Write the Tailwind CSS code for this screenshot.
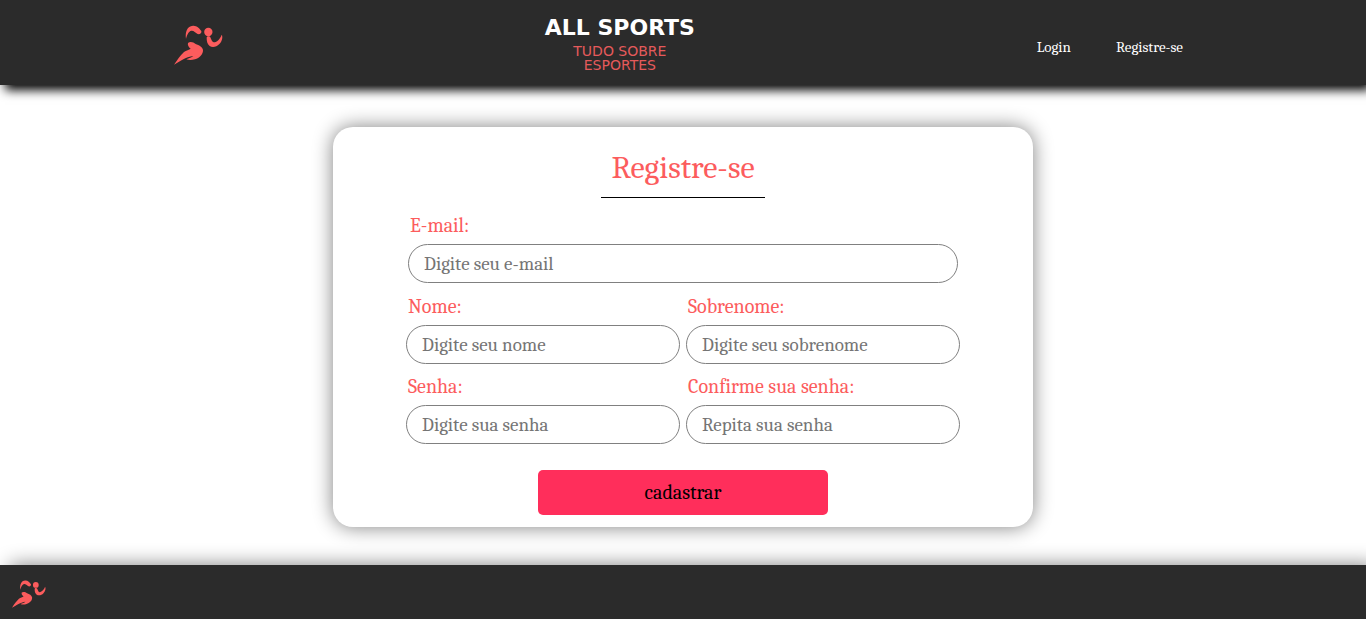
<!DOCTYPE html>
<html lang="pt-BR">
<head>
<meta charset="utf-8">
<meta name="viewport" content="width=device-width, initial-scale=1">
<title>All Sports - Registre-se</title>
<script src="https://cdn.jsdelivr.net/npm/@tailwindcss/browser@4"></script>
</head>
<body class="flex min-h-screen flex-col bg-white font-['Cambria','Noto_Serif','Droid_Serif','DejaVu_Serif_Condensed','DejaVu_Serif',serif]">
<svg class="hidden">
  <symbol id="runner" viewBox="27 27 147 120">
    <path d="M63 69C60 48 66 30 84 29C95 28 104 37 109 45C111 51 104 56 98 54C91 50 86 43 79 44C71 46 66 56 63 69Z"/>
    <circle cx="130" cy="48" r="12.5"/>
    <path d="M125 66C124 60 134 59 136 64C139 70 140 77 146 79C157 79 166 67 170 56C174 62 172 75 163 84C155 93 142 95 134 90C126 84 125 74 125 66Z"/>
    <path d="M69 81C75 76 85 78 92 84C102 88 112 92 114 102C115 115 103 126 90 130C80 133 71 133 64 130C72 127 80 124 85 120C75 121 62 126 51 132C42 137 34 142 27 146C37 132 46 118 57 108C64 103 72 101 77 98C71 94 67 87 69 81Z"/>
  </symbol>
</svg>
<header class="relative flex h-[85px] shrink-0 items-center bg-[#2b2b2b] shadow-[5px_5px_10px_#000]">
  <a href="#" aria-label="All Sports" class="ml-[174px]"><svg class="mt-1 h-10 w-[49px] fill-[#fc5c5d]"><use href="#runner"/></svg></a>
  <div class="flex flex-1 flex-col items-center pt-0.5 pr-5 text-center font-['DejaVu_Sans',sans-serif]">
    <p class="text-[22px] leading-6 font-bold text-white">ALL SPORTS</p>
    <p class="mt-1 flex flex-col text-[14px] leading-[14px] text-[#e55a5b]"><span>TUDO SOBRE</span><span>ESPORTES</span></p>
  </div>
  <nav class="mt-2.5 mr-[183px] flex gap-[45px] text-[15px] text-white">
    <a href="#">Login</a>
    <a href="#">Registre-se</a>
  </nav>
</header>
<main class="flex flex-1 justify-center px-4 pt-[42px] pb-[38px]">
  <form class="flex w-full max-w-[700px] flex-col items-center rounded-[20px] bg-white px-[73px] pt-5 pb-3 text-[20px] text-[#fc5c5d] shadow-[0_0_20px_#808080]">
    <h1 class="border-b border-black px-2.5 pb-2 text-[32px] leading-[42px]">Registre-se</h1>
    <div class="mt-4 flex w-full flex-col px-0.5">
      <label for="email" class="px-0.5 leading-6">E-mail:</label>
      <input id="email" type="email" placeholder="Digite seu e-mail" class="mt-1.5 h-[39px] rounded-full border border-[#808080] px-[15px] text-[19px] text-black placeholder:text-[#757575]">
    </div>
    <div class="mt-3 grid w-full grid-cols-2 gap-x-1.5 gap-y-[11px]">
      <div class="flex flex-col">
        <label for="nome" class="px-0.5 leading-6">Nome:</label>
        <input id="nome" type="text" placeholder="Digite seu nome" class="mt-1.5 h-[39px] rounded-full border border-[#808080] px-[15px] text-[19px] text-black placeholder:text-[#757575]">
      </div>
      <div class="flex flex-col">
        <label for="sobrenome" class="px-0.5 leading-6">Sobrenome:</label>
        <input id="sobrenome" type="text" placeholder="Digite seu sobrenome" class="mt-1.5 h-[39px] rounded-full border border-[#808080] px-[15px] text-[19px] text-black placeholder:text-[#757575]">
      </div>
      <div class="flex flex-col">
        <label for="senha" class="px-0.5 leading-6">Senha:</label>
        <input id="senha" type="password" placeholder="Digite sua senha" class="mt-1.5 h-[39px] rounded-full border border-[#808080] px-[15px] text-[19px] text-black placeholder:text-[#757575]">
      </div>
      <div class="flex flex-col">
        <label for="confirma" class="px-0.5 leading-6">Confirme sua senha:</label>
        <input id="confirma" type="password" placeholder="Repita sua senha" class="mt-1.5 h-[39px] rounded-full border border-[#808080] px-[15px] text-[19px] text-black placeholder:text-[#757575]">
      </div>
    </div>
    <button type="submit" class="mt-[26px] h-[45px] w-full max-w-[290px] rounded-[5px] bg-[#ff2e5b] text-[20px] text-black">cadastrar</button>
  </form>
</main>
<footer class="flex h-[54px] shrink-0 items-center bg-[#2b2b2b] pl-3 shadow-[10px_0_20px_#808080]">
  <a href="#" aria-label="All Sports"><svg class="mt-1 h-7 w-[34px] fill-[#fc5c5d]"><use href="#runner"/></svg></a>
</footer>
</body>
</html>
